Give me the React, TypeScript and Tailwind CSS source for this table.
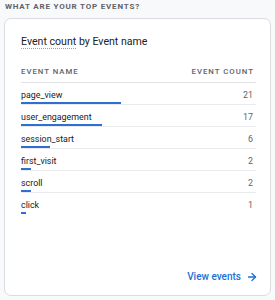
// Top events card: event name list with proportional count bars
import { ArrowRight } from "lucide-react"

const events = [
  { name: "page_view", count: 21 },
  { name: "user_engagement", count: 17 },
  { name: "session_start", count: 6 },
  { name: "first_visit", count: 2 },
  { name: "scroll", count: 2 },
  { name: "click", count: 1 },
]

const maxCount = Math.max(...events.map((e) => e.count))

export default function App() {
  return (
    <div className="w-[275px] h-[300px] bg-[#f8f9fa] px-[4px] pt-[2px] font-['Roboto',sans-serif]">
      <h2 className="text-[8px] leading-[9px] font-bold tracking-[0.8px] text-[#5f6368] pl-[1px] mb-[7px]">
        WHAT ARE YOUR TOP EVENTS?
      </h2>

      <div className="h-[278px] rounded-[7px] border border-[#dadce0] bg-white flex flex-col pl-[16px]">
        <div className="pt-[16px] pr-[14px]">
          <p className="text-[10.6px] leading-[14px] text-[#202124]">
            <span className="underline decoration-dotted decoration-[#9aa0a6] underline-offset-[3px]">Event count</span> by Event name
          </p>

          <div className="mt-[13px] h-[21px] flex items-center justify-between border-b border-[#e0e2e5] text-[7.8px] font-medium tracking-[1px] text-[#5f6368]">
            <span>EVENT NAME</span>
            <span className="pr-[2px]">EVENT COUNT</span>
          </div>

          {events.map((e, i) => (
            <div
              key={e.name}
              className={`h-[22px] pt-[6px] ${i < events.length - 1 ? "border-b border-[#e8eaed]" : ""}`}
            >
              <div className="flex justify-between text-[8.9px] leading-[12px]">
                <span className="text-[#202124]">{e.name}</span>
                <span className="text-[#5f6368] pr-[3px]">{e.count}</span>
              </div>
              <div
                className="mt-[1px] h-[2px] bg-[#2f6fd0]"
                style={{ width: (e.count / maxCount) * 100 }}
              />
            </div>
          ))}
        </div>

        <div className="mt-auto pb-[11px] pr-[12px] flex justify-end">
          <a className="flex items-center gap-[5px] text-[10px] leading-[14px] font-medium text-[#1a6fd8]">
            View events
            <ArrowRight size={20} strokeWidth={2.6} className="w-[12px] h-[12px]" />
          </a>
        </div>
      </div>
    </div>
  )
}
